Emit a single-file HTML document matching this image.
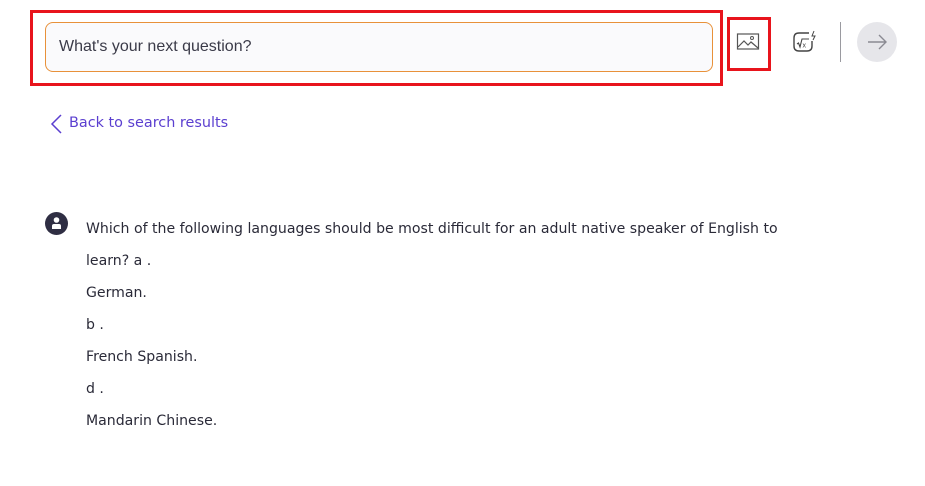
<!DOCTYPE html>
<html><head><meta charset="utf-8"><style>
*{margin:0;padding:0;box-sizing:border-box}
body{width:925px;height:486px;background:#fff;font-family:"Liberation Sans",sans-serif;position:relative;overflow:hidden}
.abs{position:absolute}
.red1{left:30px;top:10px;width:693px;height:76px;border:3px solid #e8141c}
.inp{left:45px;top:22px;width:668px;height:50px;border:1px solid #e8913a;border-radius:8px;background:#fafafc;font-size:16px;color:#3a3a48;padding-left:13px;line-height:48px}
.red2{left:727px;top:17px;width:44px;height:54px;border:3px solid #e8141c}
.div{left:840px;top:22px;width:1px;height:40px;background:#9a9aa0}
.circ{left:857px;top:22px;width:40px;height:40px;border-radius:50%;background:#e6e6ea}
.back{top:115px;color:#5b3fd0;font-family:"DejaVu Sans","Liberation Sans",sans-serif;font-size:14.4px}
.q{left:86px;top:213px;color:#2a2a38;line-height:32px;font-family:"DejaVu Sans","Liberation Sans",sans-serif;font-size:14.1px}
.av{left:45px;top:212px;width:23px;height:23px;border-radius:50%;background:#2f2e43}
</style></head><body>
<div class="abs red1"></div>
<div class="abs inp">What's your next question?</div>
<div class="abs red2"></div>
<svg class="abs" style="left:736px;top:31px" width="24" height="22" viewBox="0 0 24 22"><rect x="1.5" y="3" width="21" height="15" fill="none" stroke="#555" stroke-width="1.2"/><path d="M2 16 L8 10 L12 14 L15 11 L22 17" fill="none" stroke="#555" stroke-width="1.2"/><circle cx="16" cy="7" r="1.5" fill="none" stroke="#555" stroke-width="1"/></svg>
<svg class="abs" style="left:791px;top:29px" width="28" height="26" viewBox="0 0 28 26"><path d="M18 4 H8 Q3 4 3 9 V17 Q3 22 8 22 H16 Q21 22 21 17 V12" fill="none" stroke="#444" stroke-width="1.4"/><path d="M6 15 L7.5 14 L9 18 L11 10 H18" fill="none" stroke="#444" stroke-width="1.1"/><text x="11.5" y="18.5" font-size="7" fill="#444" font-family="Liberation Sans">x</text><path d="M23 2 L21 7 H24 L22 11" fill="none" stroke="#444" stroke-width="1"/></svg>
<div class="abs div"></div>
<div class="abs circ"></div>
<svg class="abs" style="left:866px;top:32px" width="22" height="20" viewBox="0 0 22 20"><path d="M2 10 H20 M13 3 L20 10 L13 17" fill="none" stroke="#8a8a92" stroke-width="1.4"/></svg>
<svg class="abs" style="left:50px;top:114px" width="14" height="20" viewBox="0 0 14 20"><path d="M11 1 L2 10 L11 19" fill="none" stroke="#5b3fd0" stroke-width="1.5"/></svg>
<div class="abs back" style="left:69px">Back to search results</div>
<div class="abs av"></div>
<svg class="abs" style="left:45px;top:212px" width="23" height="23" viewBox="0 0 23 23"><circle cx="11.5" cy="8" r="2.8" fill="#fff"/><path d="M7 17 V14 Q7 12 9 12 H14 Q16 12 16 14 V17 Z" fill="#fff"/></svg>
<div class="abs q">Which of the following languages should be most difficult for an adult native speaker of English to<br>learn? a .<br>German.<br>b .<br>French Spanish.<br>d .<br>Mandarin Chinese.</div>
</body></html>
